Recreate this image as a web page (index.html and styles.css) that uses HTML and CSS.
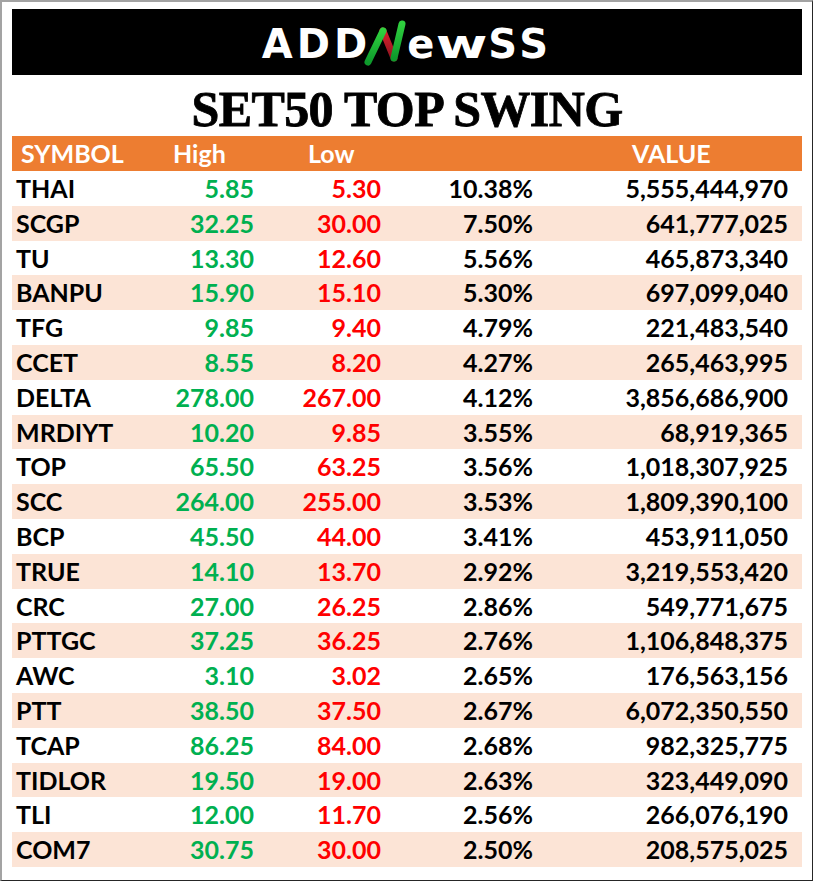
FILE: index.html
```html
<!DOCTYPE html>
<html lang="en">
<head>
<meta charset="utf-8">
<title>SET50 TOP SWING</title>
<link rel="stylesheet" href="styles.css">
</head>
<body>
<div class="frame">
  <div class="logo-bar">
    <div class="logo"><span class="logo-text">ADD</span><svg class="logo-n" width="44" height="50" viewBox="0 0 44 50" aria-hidden="true">
        <defs>
          <linearGradient id="gl" x1="0" y1="1" x2="0" y2="0">
            <stop offset="0" stop-color="#0e9a2c"/>
            <stop offset="1" stop-color="#2fd03e"/>
          </linearGradient>
          <linearGradient id="gr" x1="0" y1="0" x2="0" y2="1">
            <stop offset="0" stop-color="#d8202c"/>
            <stop offset="1" stop-color="#8e1420"/>
          </linearGradient>
        </defs>
        <path d="M20 13 L31 40" stroke="url(#gr)" stroke-width="7" stroke-linecap="round" fill="none"/>
        <path d="M5 44 L20 13" stroke="url(#gl)" stroke-width="7" stroke-linecap="round" fill="none"/>
        <path d="M31 40 L39 6" stroke="url(#gl)" stroke-width="7" stroke-linecap="round" fill="none"/>
      </svg><span class="logo-text">e</span><span class="logo-text logo-w">w</span><span class="logo-text">SS</span></div>
  </div>
  <h1 class="title">SET50 TOP SWING</h1>
  <div class="table">
    <div class="row head">
      <div class="c sym">SYMBOL</div>
      <div class="c hh">High</div>
      <div class="c hl">Low</div>
      <div class="c"></div>
      <div class="c hv">VALUE</div>
    </div>
    <div class="row"><div class="c sym">THAI</div><div class="c num up">5.85</div><div class="c num dn">5.30</div><div class="c num">10.38%</div><div class="c num val">5,555,444,970</div></div>
    <div class="row alt"><div class="c sym">SCGP</div><div class="c num up">32.25</div><div class="c num dn">30.00</div><div class="c num">7.50%</div><div class="c num val">641,777,025</div></div>
    <div class="row"><div class="c sym">TU</div><div class="c num up">13.30</div><div class="c num dn">12.60</div><div class="c num">5.56%</div><div class="c num val">465,873,340</div></div>
    <div class="row alt"><div class="c sym">BANPU</div><div class="c num up">15.90</div><div class="c num dn">15.10</div><div class="c num">5.30%</div><div class="c num val">697,099,040</div></div>
    <div class="row"><div class="c sym">TFG</div><div class="c num up">9.85</div><div class="c num dn">9.40</div><div class="c num">4.79%</div><div class="c num val">221,483,540</div></div>
    <div class="row alt"><div class="c sym">CCET</div><div class="c num up">8.55</div><div class="c num dn">8.20</div><div class="c num">4.27%</div><div class="c num val">265,463,995</div></div>
    <div class="row"><div class="c sym">DELTA</div><div class="c num up">278.00</div><div class="c num dn">267.00</div><div class="c num">4.12%</div><div class="c num val">3,856,686,900</div></div>
    <div class="row alt"><div class="c sym">MRDIYT</div><div class="c num up">10.20</div><div class="c num dn">9.85</div><div class="c num">3.55%</div><div class="c num val">68,919,365</div></div>
    <div class="row"><div class="c sym">TOP</div><div class="c num up">65.50</div><div class="c num dn">63.25</div><div class="c num">3.56%</div><div class="c num val">1,018,307,925</div></div>
    <div class="row alt"><div class="c sym">SCC</div><div class="c num up">264.00</div><div class="c num dn">255.00</div><div class="c num">3.53%</div><div class="c num val">1,809,390,100</div></div>
    <div class="row"><div class="c sym">BCP</div><div class="c num up">45.50</div><div class="c num dn">44.00</div><div class="c num">3.41%</div><div class="c num val">453,911,050</div></div>
    <div class="row alt"><div class="c sym">TRUE</div><div class="c num up">14.10</div><div class="c num dn">13.70</div><div class="c num">2.92%</div><div class="c num val">3,219,553,420</div></div>
    <div class="row"><div class="c sym">CRC</div><div class="c num up">27.00</div><div class="c num dn">26.25</div><div class="c num">2.86%</div><div class="c num val">549,771,675</div></div>
    <div class="row alt"><div class="c sym">PTTGC</div><div class="c num up">37.25</div><div class="c num dn">36.25</div><div class="c num">2.76%</div><div class="c num val">1,106,848,375</div></div>
    <div class="row"><div class="c sym">AWC</div><div class="c num up">3.10</div><div class="c num dn">3.02</div><div class="c num">2.65%</div><div class="c num val">176,563,156</div></div>
    <div class="row alt"><div class="c sym">PTT</div><div class="c num up">38.50</div><div class="c num dn">37.50</div><div class="c num">2.67%</div><div class="c num val">6,072,350,550</div></div>
    <div class="row"><div class="c sym">TCAP</div><div class="c num up">86.25</div><div class="c num dn">84.00</div><div class="c num">2.68%</div><div class="c num val">982,325,775</div></div>
    <div class="row alt"><div class="c sym">TIDLOR</div><div class="c num up">19.50</div><div class="c num dn">19.00</div><div class="c num">2.63%</div><div class="c num val">323,449,090</div></div>
    <div class="row"><div class="c sym">TLI</div><div class="c num up">12.00</div><div class="c num dn">11.70</div><div class="c num">2.56%</div><div class="c num val">266,076,190</div></div>
    <div class="row alt"><div class="c sym">COM7</div><div class="c num up">30.75</div><div class="c num dn">30.00</div><div class="c num">2.50%</div><div class="c num val">208,575,025</div></div>
  </div>
</div>
</body>
</html>
```

FILE: styles.css
```css
html, body {
  margin: 0;
  padding: 0;
  background: #ffffff;
}

.frame {
  box-sizing: border-box;
  width: 813px;
  height: 881px;
  border-top: 2px solid #a3a3a3;
  border-left: 2px solid #a3a3a3;
  border-right: 1px solid #262626;
  border-bottom: 1px solid #262626;
  padding: 7px 10px 0 10px;
  background: #ffffff;
}

.logo-bar {
  height: 66px;
  background: #000000;
  display: flex;
  align-items: center;
  justify-content: center;
}

.logo {
  padding-top: 2px;
  white-space: nowrap;
  line-height: 1;
}

.logo-text {
  font-family: "DejaVu Sans", sans-serif;
  font-weight: bold;
  font-size: 40px;
  color: #ffffff;
  letter-spacing: 4px;
}

.logo-w {
  display: inline-block;
  transform: scaleX(1.4);
  margin: 0 3px 0 6px;
}

.logo-n {
  vertical-align: -10px;
  margin-left: -8px;
  margin-right: 0;
}

.title {
  margin: 0;
  height: 53px;
  padding-top: 8px;
  line-height: 53px;
  text-align: center;
  font-family: "Liberation Serif", "Times New Roman", serif;
  font-weight: bold;
  font-size: 50px;
  letter-spacing: -0.6px;
  color: #000000;
  -webkit-text-stroke: 0.8px #000000;
}

.table {
  font-family: Lato, "Open Sans", sans-serif;
  font-weight: bold;
  font-size: 25px;
}

.row {
  display: grid;
  grid-template-columns: 148px 98px 127px 152px 265px;
  height: 34.8px;
  line-height: 34.8px;
  color: #000000;
  white-space: nowrap;
}

.row.alt {
  background: #fce4d6;
}

.row.head {
  height: 35px;
  line-height: 35px;
  background: #ed7d31;
  color: #ffffff;
}

.sym {
  padding-left: 4px;
}

.head .sym {
  padding-left: 9px;
}

.hh {
  padding-left: 13px;
}

.hl {
  padding-left: 50px;
}

.hv {
  padding-left: 95px;
}

.num {
  text-align: right;
  padding-right: 4px;
}

.num.val {
  padding-right: 14px;
}

.up {
  color: #00b050;
}

.dn {
  color: #ff0000;
}
```
